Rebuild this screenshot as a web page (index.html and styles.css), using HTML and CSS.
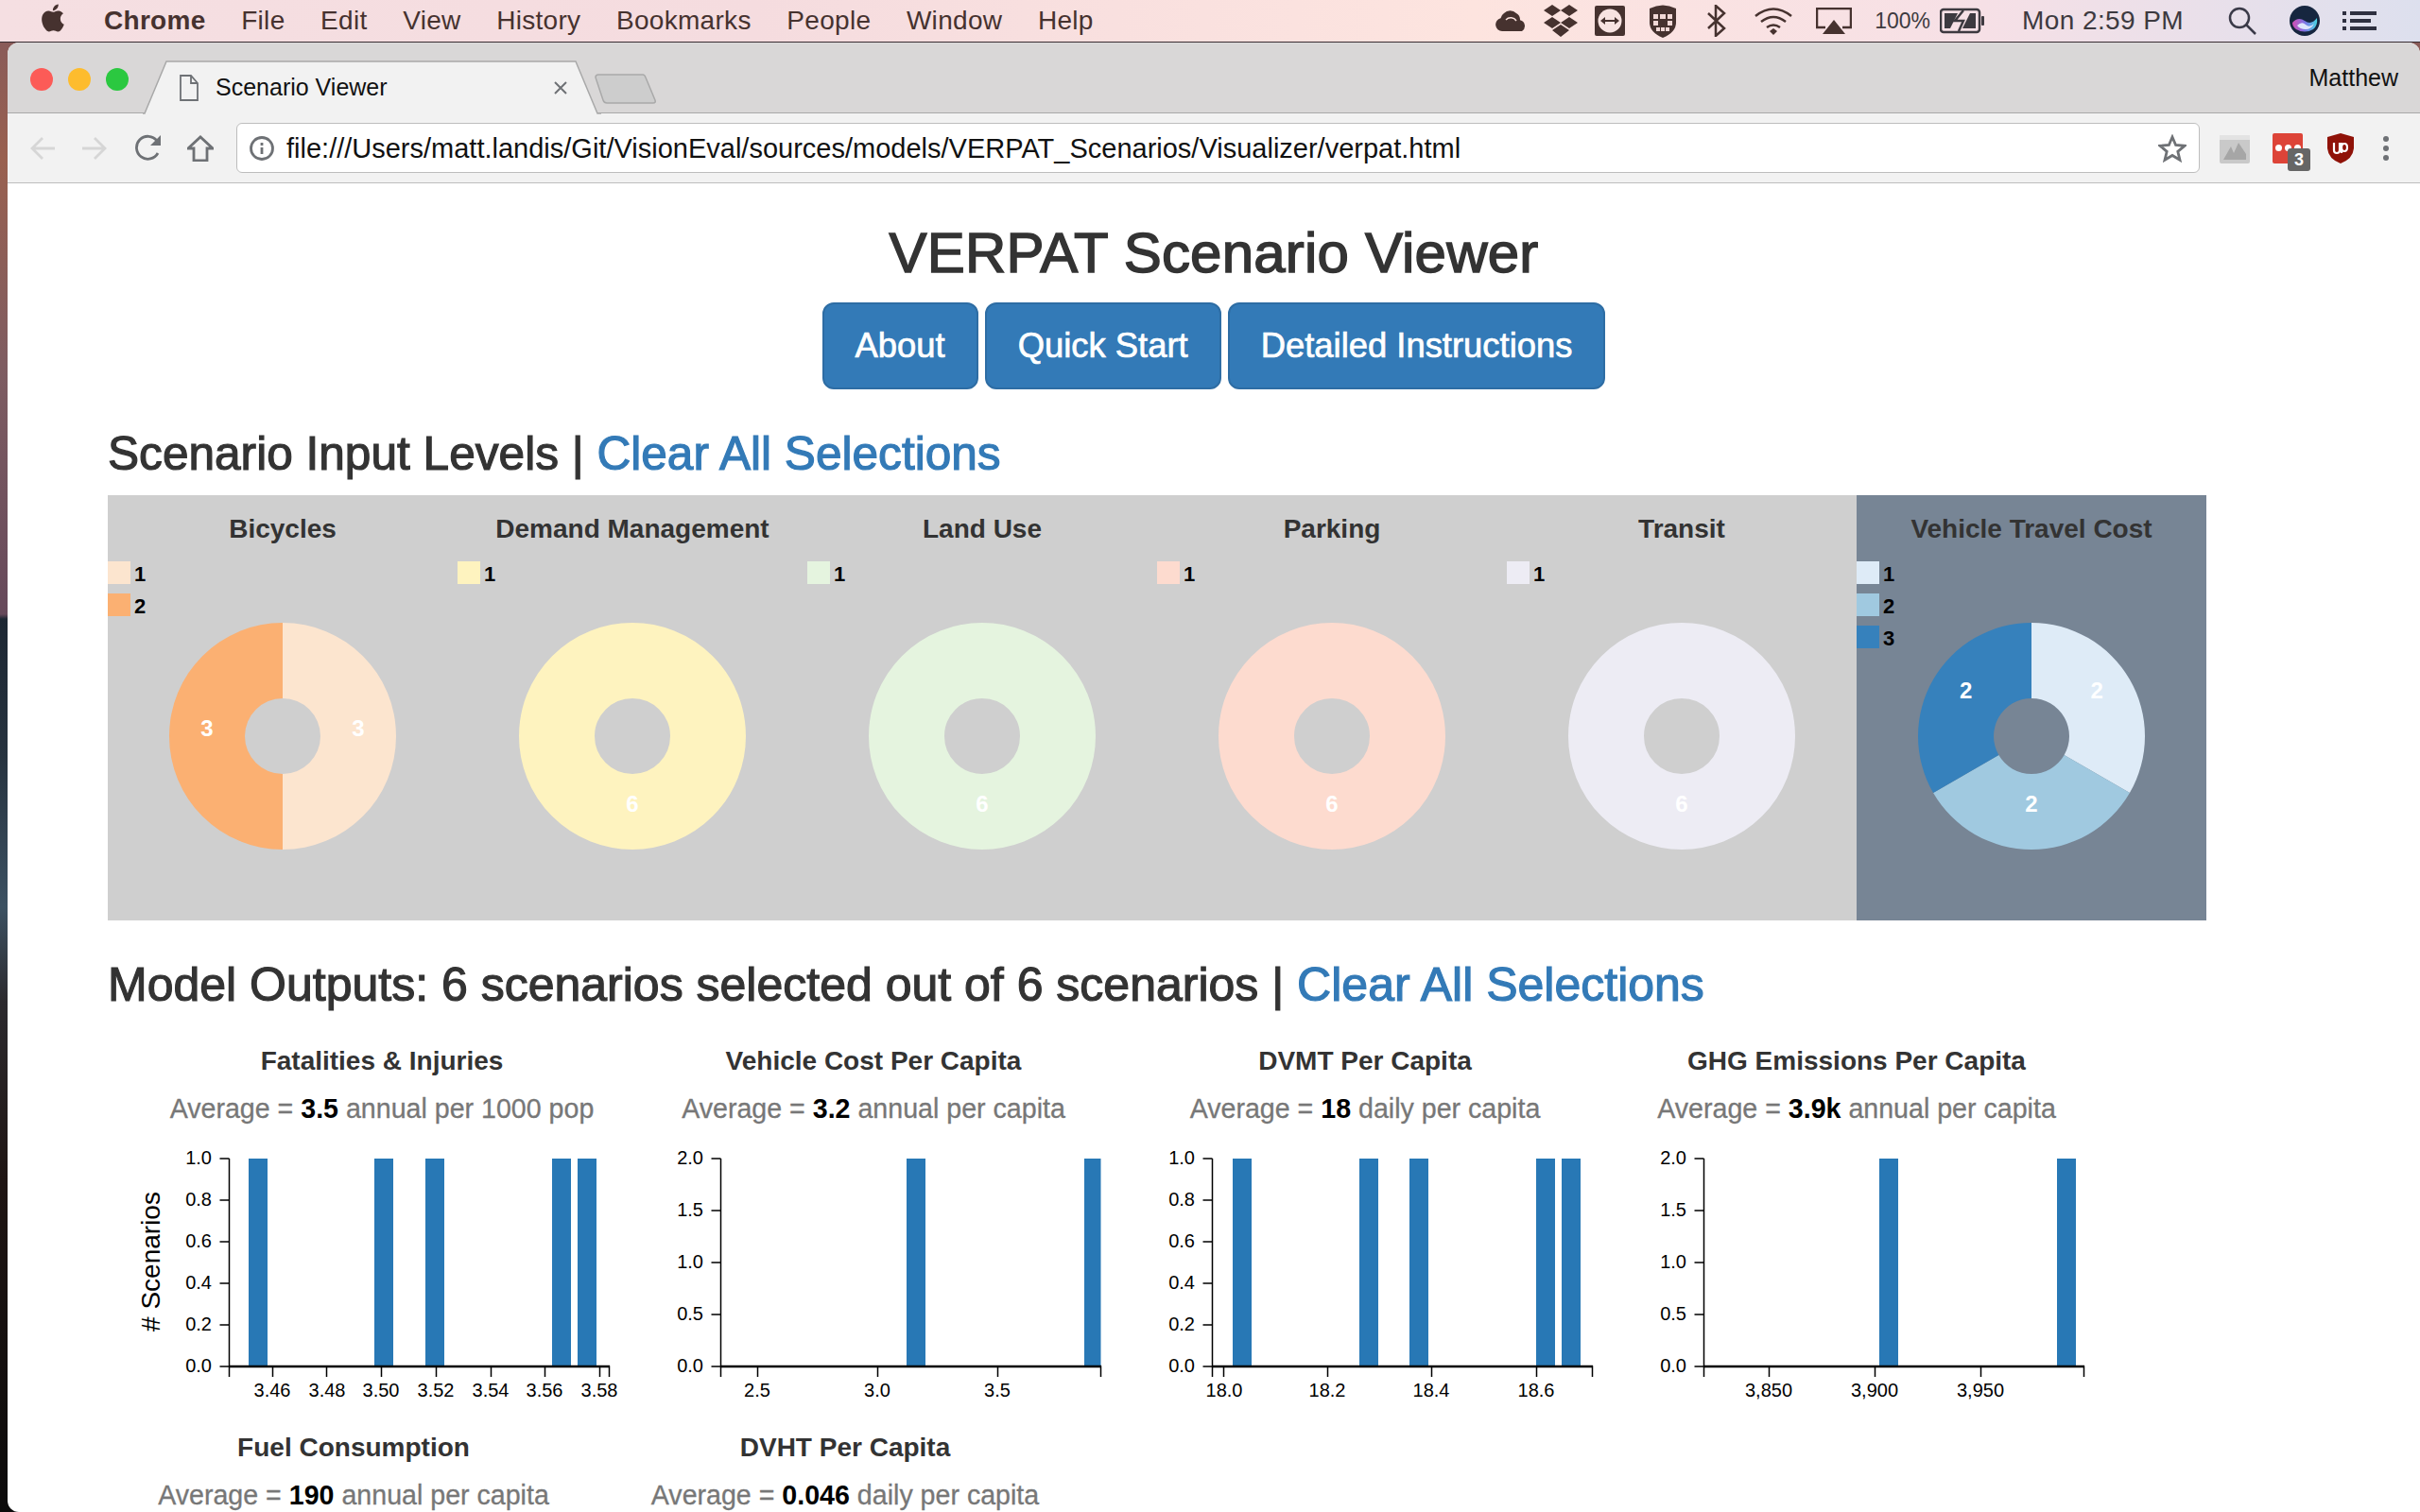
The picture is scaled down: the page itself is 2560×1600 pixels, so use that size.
FILE: index.html
```html
<!DOCTYPE html>
<html lang="en">
<head>
    <meta charset="UTF-8">
    <title>Scenario Viewer</title>
    <link rel="stylesheet" href="styles.css">
</head>
<body>
    <div class="menubar">
        <svg class="apple" width="30" height="32" viewBox="2 1 20 22"><path d="M18.71 19.5c-.83 1.24-1.71 2.45-3.05 2.47-1.34.03-1.77-.79-3.29-.79-1.53 0-2 .77-3.27.82-1.31.05-2.3-1.32-3.14-2.53C4.25 17 2.94 12.45 4.7 9.39c.87-1.52 2.43-2.48 4.12-2.51 1.28-.02 2.5.87 3.29.87.78 0 2.26-1.07 3.81-.91.65.03 2.47.26 3.64 1.98-.09.06-2.17 1.28-2.15 3.81.03 3.02 2.65 4.03 2.68 4.04-.03.07-.42 1.44-1.38 2.83M13 3.5c.73-.83 1.94-1.46 2.94-1.5.13 1.17-.34 2.35-1.04 3.19-.69.85-1.83 1.51-2.95 1.42-.15-1.15.41-2.35 1.05-3.11z"/></svg>
        <nav class="menu">
            <strong>Chrome</strong>
            <span>File</span>
            <span>Edit</span>
            <span>View</span>
            <span>History</span>
            <span>Bookmarks</span>
            <span>People</span>
            <span>Window</span>
            <span>Help</span>
        </nav>
        <div class="status">
            <svg class="st-cloud" width="36" height="24" viewBox="0 0 36 24"><path d="M8 23a7 7 0 0 1-1.500-13.800 8.500 8.500 0 0 1 3.500-5.200 9 9 0 0 1 13 0 8 8 0 0 1 4 7.200A6.500 6.500 0 0 1 29 23z"/><path d="M12 11a7 7 0 0 1 11 1" fill="none" stroke="#fbe2de" stroke-width="1.500"/></svg>
            <svg class="st-dropbox" width="38" height="34" viewBox="0 0 38 34"><path d="M10 0l9 6-9 6-9-6zM28 0l9 6-9 6-9-6zM10 13l9 6-9 6-9-6zM28 13l9 6-9 6-9-6zM19 21l9 6-9 7-9-7z"/></svg>
            <svg class="st-viewer" width="32" height="32" viewBox="0 0 32 32"><rect width="32" height="32" rx="2"/><circle cx="16" cy="16" r="12.500" fill="#f7e3e1"/><path d="M6 16l5-4v3h10v-3l5 4-5 4v-3H11v3z"/></svg>
            <svg class="st-shield" width="30" height="35" viewBox="0 0 30 35"><path d="M1 4q14-7 28 0v15q0 10-14 16Q1 29 1 19z"/><path fill="#f1d8d6" d="M5 10h5v5H5zM12 10h6v5h-6zM20 10h5v5h-5zM5 17h5v5H5zM20 17h5v5h-5zM8 24h4v4H8zM13 24h4v4h-4zM18 24h4v4h-4z"/></svg>
            <svg class="st-bluetooth" width="20" height="34" viewBox="0 0 20 34"><path class="thin" d="M1 9l17 16-9 8V1l9 8L1 25"/></svg>
            <svg class="st-wifi" width="42" height="30" viewBox="0 0 42 30"><path class="thin" d="M2 10q19-15 38 0M8 16q13-10 26 0M14 22q7-5 14 0"/><path d="M17 26l4-3 4 3-4 4z"/></svg>
            <svg class="st-airplay" width="38" height="28" viewBox="0 0 38 28"><path class="thin" d="M10 21H1V1h36v20h-9"/><path d="M19 13l12 15H7z"/></svg>
            <span class="st-text st-percent">100%</span>
            <svg class="st-battery" width="48" height="28" viewBox="0 0 48 28"><rect class="thin" x="1" y="2" width="41" height="24" rx="3"/><path d="M5 6h14l-8 16H5zM38 6v16H24l8-16z"/><path class="thin" d="M25 3l-9 11h9l-5 11"/><rect x="44" y="9" width="3" height="10" rx="1"/></svg>
            <span class="st-text st-clock">Mon 2:59 PM</span>
            <svg class="st-search" width="30" height="30" viewBox="0 0 30 30"><circle class="thin" cx="12" cy="12" r="10"/><path class="thin" d="M19 19l10 10"/></svg>
            <svg class="st-siri" width="32" height="32" viewBox="0 0 32 32">
                <defs>
                    <linearGradient id="siriGlow" x1="0" x2="1" y1="0" y2="0">
                        <stop offset="0" stop-color="#d24fb4"/>
                        <stop offset=".5" stop-color="#7d74e6"/>
                        <stop offset="1" stop-color="#48d6e2"/>
                    </linearGradient>
                </defs>
                <circle cx="16" cy="16" r="16" fill="#16263f"/>
                <path d="M3 18q6-7 13-2t13-3q1 8-4 12-9 5-18 0-4-3-4-7z" fill="url(#siriGlow)"/>
                <path d="M8 21q5-5 9-1t9-1q-3 6-9 6t-9-4z" fill="#dfe6fb"/>
            </svg>
            <svg class="st-list" width="36" height="20" viewBox="0 0 36 20"><path d="M0 0h4v4H0zM8 0h28v4H8zM0 8h4v4H0zM8 8h22v4H8zM0 16h4v4H0zM8 16h28v4H8z"/></svg>
        </div>
    </div>

    <div class="window">
        <div class="tabstrip">
            <div class="lights">
                <span class="light light-red"></span>
                <span class="light light-yellow"></span>
                <span class="light light-green"></span>
            </div>
            <div class="tab">
                <svg class="tab-shape" width="485" height="57" viewBox="0 0 485 57"><path d="M0 56h2L25 1h433l23 55h4"/></svg>
                <svg class="tab-doc" width="20" height="28" viewBox="0 0 20 28"><path d="M1 1h11l7 8v18H1zM12 1v8h7"/></svg>
                <span class="tab-title">Scenario Viewer</span>
                <svg class="tab-close" width="14" height="14" viewBox="0 0 14 14"><path d="M1 1l12 12M13 1L1 13"/></svg>
            </div>
            <svg class="newtab" width="66" height="32" viewBox="0 0 66 32"><path d="M1 4q0-3 3-3h47q2 0 3 3l10 24q1 3-2 3H13q-3 0-4-3z"/></svg>
            <span class="profile">Matthew</span>
        </div>

        <div class="toolbar">
            <svg class="tb-back" width="28" height="26" viewBox="0 0 28 26"><path d="M27 13H3M14 2L3 13l11 11"/></svg>
            <svg class="tb-forward" width="28" height="26" viewBox="0 0 28 26"><path d="M1 13h24M14 2l11 11-11 11"/></svg>
            <svg class="tb-reload" width="28" height="30" viewBox="0 0 28 30"><path d="M24 20a12 12 0 1 1-1-13"/><path class="solid" d="M27 1v11H16z"/></svg>
            <svg class="tb-home" width="28" height="28" viewBox="0 0 28 28"><path d="M1 14L14 2l13 12h-6v13H7V14z"/></svg>
            <div class="omnibox">
                <svg class="omni-info" width="26" height="26" viewBox="0 0 26 26"><circle cx="13" cy="13" r="11.500"/><path d="M13 12v7M13 7v3"/></svg>
                <span class="omni-url">file:///Users/matt.landis/Git/VisionEval/sources/models/VERPAT_Scenarios/Visualizer/verpat.html</span>
                <svg class="omni-star" width="30" height="30" viewBox="0 0 30 30"><path d="M15 3l3.600 8.500 9.400.8-7.200 6 2.200 9-8-4.800-8 4.800 2.200-9-7.200-6 9.400-.8z"/></svg>
            </div>
            <svg class="ext-map" width="32" height="32" viewBox="0 0 32 32"><rect y="2" width="32" height="30" rx="2" fill="#c9c9c9"/><rect y="2" width="32" height="5" fill="#e3e3e3"/><path d="M4 28l8-14 3 7 5-11 8 12v6H10z" fill="#a6a6a6"/></svg>
            <div class="ext-red">
                <span class="ext-dot"></span><span class="ext-dot"></span><span class="ext-dot"></span>
                <span class="ext-badge">3</span>
            </div>
            <svg class="ext-ublock" width="28" height="32" viewBox="0 0 28 32"><path fill="#8f1208" d="M14 0l14 4v12q-1 11-14 16Q1 27 0 16V4z"/><path d="M7 10v8q0 3 3 3t3-3v-8M15 21v-11M15 15q0-4 3-4t3 4-3 4-3-4z" fill="none" stroke="#fff" stroke-width="2.200"/></svg>
            <div class="tb-menu"><span></span><span></span><span></span></div>
        </div>

        <div class="page">
            <h1 class="page-title">VERPAT Scenario Viewer</h1>
            <div class="btn-row">
                <a class="btn">About</a>
                <a class="btn">Quick Start</a>
                <a class="btn">Detailed Instructions</a>
            </div>

            <h2 class="section-title">Scenario Input Levels | <a>Clear All Selections</a></h2>
            <div class="inputs">
                <div class="dial">
                    <h4>Bicycles</h4>
                    <svg width="370" height="330" viewBox="0 0 370 330">
                        <rect width="24" height="24" fill="#fce5cf"/><text class="legend" x="28" y="21">1</text>
                        <rect y="34" width="24" height="24" fill="#fbb072"/><text class="legend" x="28" y="55">2</text>
                        <path fill="#fce5cf" d="M185 65A120 120 0 0 1 185 305L185 225A40 40 0 0 0 185 145Z"/>
                        <path fill="#fbb072" d="M185 305A120 120 0 0 1 185 65L185 145A40 40 0 0 0 185 225Z"/>
                        <text class="slice" x="265" y="185">3</text>
                        <text class="slice" x="105" y="185">3</text>
                    </svg>
                </div>
                <div class="dial">
                    <h4>Demand Management</h4>
                    <svg width="370" height="330" viewBox="0 0 370 330">
                        <rect width="24" height="24" fill="#fef3bf"/><text class="legend" x="28" y="21">1</text>
                        <circle cx="185" cy="185" r="80" fill="none" stroke="#fef3bf" stroke-width="80"/>
                        <text class="slice" x="185" y="265">6</text>
                    </svg>
                </div>
                <div class="dial">
                    <h4>Land Use</h4>
                    <svg width="370" height="330" viewBox="0 0 370 330">
                        <rect width="24" height="24" fill="#e5f4df"/><text class="legend" x="28" y="21">1</text>
                        <circle cx="185" cy="185" r="80" fill="none" stroke="#e5f4df" stroke-width="80"/>
                        <text class="slice" x="185" y="265">6</text>
                    </svg>
                </div>
                <div class="dial">
                    <h4>Parking</h4>
                    <svg width="370" height="330" viewBox="0 0 370 330">
                        <rect width="24" height="24" fill="#fddbcf"/><text class="legend" x="28" y="21">1</text>
                        <circle cx="185" cy="185" r="80" fill="none" stroke="#fddbcf" stroke-width="80"/>
                        <text class="slice" x="185" y="265">6</text>
                    </svg>
                </div>
                <div class="dial">
                    <h4>Transit</h4>
                    <svg width="370" height="330" viewBox="0 0 370 330">
                        <rect width="24" height="24" fill="#edecf4"/><text class="legend" x="28" y="21">1</text>
                        <circle cx="185" cy="185" r="80" fill="none" stroke="#edecf4" stroke-width="80"/>
                        <text class="slice" x="185" y="265">6</text>
                    </svg>
                </div>
                <div class="dial dial-active">
                    <h4>Vehicle Travel Cost</h4>
                    <svg width="370" height="330" viewBox="0 0 370 330">
                        <rect width="24" height="24" fill="#deebf7"/><text class="legend" x="28" y="21">1</text>
                        <rect y="34" width="24" height="24" fill="#a0c9e0"/><text class="legend" x="28" y="55">2</text>
                        <rect y="68" width="24" height="24" fill="#3681bc"/><text class="legend" x="28" y="89">3</text>
                        <path fill="#deebf7" d="M185 65A120 120 0 0 1 288.920 245L219.640 205A40 40 0 0 0 185 145Z"/>
                        <path fill="#a0c9e0" d="M288.920 245A120 120 0 0 1 81.080 245L150.360 205A40 40 0 0 0 219.640 205Z"/>
                        <path fill="#3681bc" d="M81.080 245A120 120 0 0 1 185 65L185 145A40 40 0 0 0 150.360 205Z"/>
                        <text class="slice" x="254.300" y="145">2</text>
                        <text class="slice" x="185" y="265">2</text>
                        <text class="slice" x="115.700" y="145">2</text>
                    </svg>
                </div>
            </div>

            <h2 class="section-title section-outputs">Model Outputs: 6 scenarios selected out of 6 scenarios | <a>Clear All Selections</a></h2>
            <div class="charts charts-first">
                <div class="chart">
                    <h4>Fatalities &amp; Injuries</h4>
                    <p>Average = <b>3.5</b> annual per 1000 pop</p>
                    <svg width="520" height="290" viewBox="0 0 520 290">
                        <text class="y-title" transform="translate(25 125) rotate(-90)"># Scenarios</text>
                        <path class="bar" d="M119 16h20v220h-20zM252 16h20v220h-20zM306 16h20v220h-20zM440 16h20v220h-20zM467 16h20v220h-20z"/>
                        <path class="axis" d="M88.500 16h10M88.500 60h10M88.500 104h10M88.500 148h10M88.500 192h10M88.500 236h10M98.500 16v231M98.500 236H500.500v11M144.500 236v11M201.500 236v11M259.500 236v11M317.500 236v11M375.500 236v11M432.500 236v11M490.500 236v11"/>
                        <path class="axis-base" d="M98 236H501"/>
                        <g class="y-ticks">
                            <text x="80" y="22">1.0</text><text x="80" y="66">0.8</text><text x="80" y="110">0.6</text><text x="80" y="154">0.4</text><text x="80" y="198">0.2</text><text x="80" y="242">0.0</text>
                        </g>
                        <g class="x-ticks">
                            <text x="144" y="268">3.46</text><text x="202" y="268">3.48</text><text x="259" y="268">3.50</text><text x="317" y="268">3.52</text><text x="375" y="268">3.54</text><text x="432" y="268">3.56</text><text x="490" y="268">3.58</text>
                        </g>
                    </svg>
                </div>
                <div class="chart">
                    <h4>Vehicle Cost Per Capita</h4>
                    <p>Average = <b>3.2</b> annual per capita</p>
                    <svg width="520" height="290" viewBox="0 0 520 290">
                        <path class="bar" d="M295 16h20v220h-20zM483 16h17.500v220H483z"/>
                        <path class="axis" d="M88.500 16h10M88.500 71h10M88.500 126h10M88.500 181h10M88.500 236h10M98.500 16v231M98.500 236H500.500v11M137.500 236v11M264.500 236v11M391.500 236v11"/>
                        <path class="axis-base" d="M98 236H501"/>
                        <g class="y-ticks">
                            <text x="80" y="22">2.0</text><text x="80" y="77">1.5</text><text x="80" y="132">1.0</text><text x="80" y="187">0.5</text><text x="80" y="242">0.0</text>
                        </g>
                        <g class="x-ticks">
                            <text x="137" y="268">2.5</text><text x="264" y="268">3.0</text><text x="391" y="268">3.5</text>
                        </g>
                    </svg>
                </div>
                <div class="chart">
                    <h4>DVMT Per Capita</h4>
                    <p>Average = <b>18</b> daily per capita</p>
                    <svg width="520" height="290" viewBox="0 0 520 290">
                        <path class="bar" d="M120 16h20v220h-20zM254 16h20v220h-20zM307 16h20v220h-20zM441 16h20v220h-20zM468 16h20v220h-20z"/>
                        <path class="axis" d="M88.500 16h10M88.500 60h10M88.500 104h10M88.500 148h10M88.500 192h10M88.500 236h10M98.500 16v231M98.500 236H500.500v11M110.500 236v11M220.500 236v11M330.500 236v11M441.500 236v11"/>
                        <path class="axis-base" d="M98 236H501"/>
                        <g class="y-ticks">
                            <text x="80" y="22">1.0</text><text x="80" y="66">0.8</text><text x="80" y="110">0.6</text><text x="80" y="154">0.4</text><text x="80" y="198">0.2</text><text x="80" y="242">0.0</text>
                        </g>
                        <g class="x-ticks">
                            <text x="111" y="268">18.0</text><text x="220" y="268">18.2</text><text x="330" y="268">18.4</text><text x="441" y="268">18.6</text>
                        </g>
                    </svg>
                </div>
                <div class="chart">
                    <h4>GHG Emissions Per Capita</h4>
                    <p>Average = <b>3.9k</b> annual per capita</p>
                    <svg width="520" height="290" viewBox="0 0 520 290">
                        <path class="bar" d="M284 16h20v220h-20zM472 16h20v220h-20z"/>
                        <path class="axis" d="M88.500 16h10M88.500 71h10M88.500 126h10M88.500 181h10M88.500 236h10M98.500 16v231M98.500 236H500.500v11M167.500 236v11M279.500 236v11M391.500 236v11"/>
                        <path class="axis-base" d="M98 236H501"/>
                        <g class="y-ticks">
                            <text x="80" y="22">2.0</text><text x="80" y="77">1.5</text><text x="80" y="132">1.0</text><text x="80" y="187">0.5</text><text x="80" y="242">0.0</text>
                        </g>
                        <g class="x-ticks">
                            <text x="167" y="268">3,850</text><text x="279" y="268">3,900</text><text x="391" y="268">3,950</text>
                        </g>
                    </svg>
                </div>
            </div>
            <div class="charts">
                <div class="chart">
                    <h4>Fuel Consumption</h4>
                    <p>Average = <b>190</b> annual per capita</p>
                </div>
                <div class="chart">
                    <h4>DVHT Per Capita</h4>
                    <p>Average = <b>0.046</b> daily per capita</p>
                </div>
            </div>
        </div>
    </div>
</body>
</html>
```

FILE: styles.css
```css
html, body {
    margin: 0;
    padding: 0;
    height: 100%;
}
body {
    height: 1600px;
    overflow: hidden;
    display: flex;
    flex-direction: column;
    font-family: "Liberation Sans", Arial, sans-serif;
    color: #333;
    background: linear-gradient(180deg, #84595c 0, #99604f 170px, #7d5c62 400px, #66495a 650px, #1d2733 655px, #27333f 800px, #3c5162 960px, #2c2a2e 1060px, #1f1513 1250px, #0c0b0b 1600px);
}

/* mac menu bar */
.menubar {
    height: 44px;
    flex: none;
    display: flex;
    align-items: center;
    position: relative;
    background: linear-gradient(90deg, #f5dfe2 0, #f5dcdf 800px, #fde4df 1560px, #f6e0e6 2100px, #dde0ee 2560px);
    border-bottom: 1px solid #3a2e33;
    color: #46322f;
    font-size: 28px;
    letter-spacing: .3px;
}
.menubar svg {
    fill: currentColor;
    flex: none;
}
.menubar .thin {
    fill: none;
    stroke: currentColor;
    stroke-width: 2.500;
}
.apple {
    margin-left: 41px;
    margin-top: -6px;
}
.menu {
    display: flex;
    gap: 37.600px;
    margin-left: 39px;
    margin-right: auto;
}
.status {
    display: flex;
    align-items: center;
    margin-right: 46px;
}
.st-dropbox { margin-left: 15px; }
.st-viewer { margin-left: 17px; }
.st-shield { margin-left: 25px; }
.st-bluetooth { margin-left: 32px; }
.st-wifi { margin-left: 29px; }
.st-airplay { margin-left: 24px; }
.st-text {
    color: #3d3a40;
}
.st-percent {
    margin-left: 24px;
    font-size: 23px;
    letter-spacing: 0;
}
.st-battery { margin-left: 10px; color: #3d3a40; }
.st-clock {
    margin-left: 39px;
    letter-spacing: .4px;
}
.st-search { margin-left: 47px; color: #3a3a48; }
.st-siri { margin-left: 35px; }
.st-list { margin-left: 24px; color: #2e3040; }

/* browser window */
.window {
    flex: 1;
    min-height: 0;
    margin-left: 8px;
    display: flex;
    flex-direction: column;
    border-radius: 12px 12px 0 12px;
    overflow: hidden;
    background: #fff;
}
.tabstrip {
    height: 74px;
    flex: none;
    display: flex;
    align-items: flex-end;
    background: #d9d7d7;
    border-bottom: 1px solid #a9a9a9;
    position: relative;
}
.lights {
    display: flex;
    gap: 16px;
    align-self: flex-start;
    margin: 27px 0 0 24px;
}
.light {
    width: 24px;
    height: 24px;
    border-radius: 50%;
}
.light-red { background: #fc5b57; }
.light-yellow { background: #fdbc2e; }
.light-green { background: #2bc840; }
.tab {
    width: 485px;
    height: 56px;
    margin-left: 15px;
    margin-bottom: -1px;
    display: flex;
    align-items: center;
    position: relative;
}
.tab-shape {
    position: absolute;
    left: 0;
    top: 0;
    fill: #f2f2f2;
    stroke: #a9a9a9;
    stroke-width: 1.500;
}
.tab-doc, .tab-title, .tab-close {
    position: relative;
}
.tab-doc {
    margin-left: 39px;
    margin-top: 2px;
    fill: none;
    stroke: #6e7175;
    stroke-width: 1.800;
}
.tab-title {
    margin-left: 18px;
    font-size: 25px;
    color: #111;
}
.tab-close {
    margin-left: auto;
    margin-right: 36px;
    margin-top: 2px;
    fill: none;
    stroke: #6e7175;
    stroke-width: 2;
}
.newtab {
    margin: 0 0 9px -7px;
    fill: #cdcdcd;
    stroke: #a9a9a9;
    stroke-width: 1.500;
}
.profile {
    margin-left: auto;
    margin-right: 23px;
    align-self: center;
    font-size: 25px;
    color: #111;
}

.toolbar {
    height: 73px;
    flex: none;
    display: flex;
    align-items: center;
    background: #f2f2f2;
    border-bottom: 1px solid #bdbdbd;
}
.toolbar svg {
    flex: none;
    fill: none;
    stroke: #6e7175;
    stroke-width: 2.800;
}
.toolbar .solid {
    fill: #6e7175;
    stroke: none;
}
.toolbar .tb-back, .toolbar .tb-forward {
    stroke: #d6d6d6;
}
.tb-back { margin-left: 23px; }
.tb-forward { margin-left: 27px; }
.tb-reload { margin-left: 29px; }
.tb-home { margin-left: 27px; }
.omnibox {
    width: 2077px;
    height: 53px;
    box-sizing: border-box;
    margin-left: 24px;
    padding-top: 1px;
    display: flex;
    align-items: center;
    background: #fff;
    border: 1px solid #bdbdbd;
    border-radius: 6px;
}
.omni-info {
    margin-left: 13px;
}
.omni-url {
    margin-left: 13px;
    font-size: 29px;
    color: #111;
    white-space: nowrap;
}
.omni-star {
    margin-left: auto;
    margin-right: 13px;
}
.ext-map {
    margin-left: 21px;
    stroke: none !important;
}
.ext-red {
    width: 32px;
    height: 32px;
    margin-left: 24px;
    display: flex;
    align-items: center;
    gap: 3px;
    padding-left: 3px;
    box-sizing: border-box;
    background: #dd4438;
    border-radius: 2px;
    position: relative;
}
.ext-dot {
    width: 7px;
    height: 7px;
    border-radius: 50%;
    background: #fff;
}
.ext-badge {
    position: absolute;
    left: 16px;
    top: 16px;
    width: 24px;
    height: 24px;
    border-radius: 3px;
    background: #666;
    color: #fff;
    font-size: 18px;
    font-weight: bold;
    text-align: center;
    line-height: 24px;
}
.ext-ublock {
    margin-left: 26px;
    stroke: none !important;
}
.tb-menu {
    margin-left: 31px;
    display: flex;
    flex-direction: column;
    gap: 4px;
}
.tb-menu span {
    width: 6px;
    height: 6px;
    border-radius: 50%;
    background: #6e7175;
}

/* page content */
.page {
    flex: 1;
    min-height: 0;
    overflow: hidden;
}
.page-title {
    margin: 39px 0 0;
    font-size: 60px;
    line-height: 70px;
    letter-spacing: .2px;
    font-weight: normal;
    -webkit-text-stroke: 1.500px #333;
    text-align: center;
}
.btn-row {
    display: flex;
    justify-content: center;
    gap: 7px;
    margin-top: 17px;
}
.btn {
    height: 92px;
    box-sizing: border-box;
    padding: 0 33px;
    display: flex;
    align-items: center;
    font-size: 36.400px;
    -webkit-text-stroke: .7px #fff;
    color: #fff;
    background: #337ab7;
    border: 2px solid #2e6da4;
    border-radius: 12px;
}
.section-title {
    margin: 38px 0 0 106px;
    font-size: 49.600px;
    line-height: 60px;
    font-weight: normal;
    -webkit-text-stroke: 1.200px #333;
    white-space: nowrap;
}
.section-title a {
    color: #337ab7;
    -webkit-text-stroke: 1.200px #337ab7;
}
.section-outputs {
    margin-top: 38px;
    font-size: 50px;
}
.inputs {
    display: flex;
    width: 2220px;
    height: 450px;
    margin: 14px 0 0 106px;
    background: #cfcfcf;
}
.dial {
    width: 370px;
    flex: none;
}
.dial-active {
    background: #778595;
}
.dial h4 {
    margin: 16px 0 14px;
    font-size: 28px;
    line-height: 40px;
    text-align: center;
}
.dial svg {
    display: block;
}
.legend {
    font-size: 22px;
    font-weight: bold;
    fill: #000;
}
.slice {
    font-size: 24px;
    font-weight: bold;
    fill: #fff;
    text-anchor: middle;
}

.charts {
    display: grid;
    grid-template-columns: repeat(4, 520px);
    margin: 12px 0 0 106px;
}
.charts-first {
    margin-top: 31px;
    padding-left: 30px;
}
.chart h4 {
    margin: 0;
    font-size: 28px;
    line-height: 40px;
    text-align: center;
}
.chart p {
    margin: 10px 0 0;
    font-size: 28.600px;
    line-height: 40px;
    color: #777;
    -webkit-text-stroke: .3px #777;
    text-align: center;
}
.chart b {
    color: #000;
    -webkit-text-stroke: 0;
}
.chart svg {
    display: block;
    margin-top: 17px;
}
.bar {
    fill: #2878b5;
}
.axis {
    fill: none;
    stroke: #000;
    stroke-width: 1.500;
}
.axis-base {
    fill: none;
    stroke: #000;
    stroke-width: 2.500;
}
.y-ticks text {
    font-size: 20px;
    fill: #000;
    text-anchor: end;
}
.x-ticks text {
    font-size: 20px;
    fill: #000;
    text-anchor: middle;
}
.y-title {
    font-size: 28px;
    fill: #000;
    text-anchor: middle;
}
```
